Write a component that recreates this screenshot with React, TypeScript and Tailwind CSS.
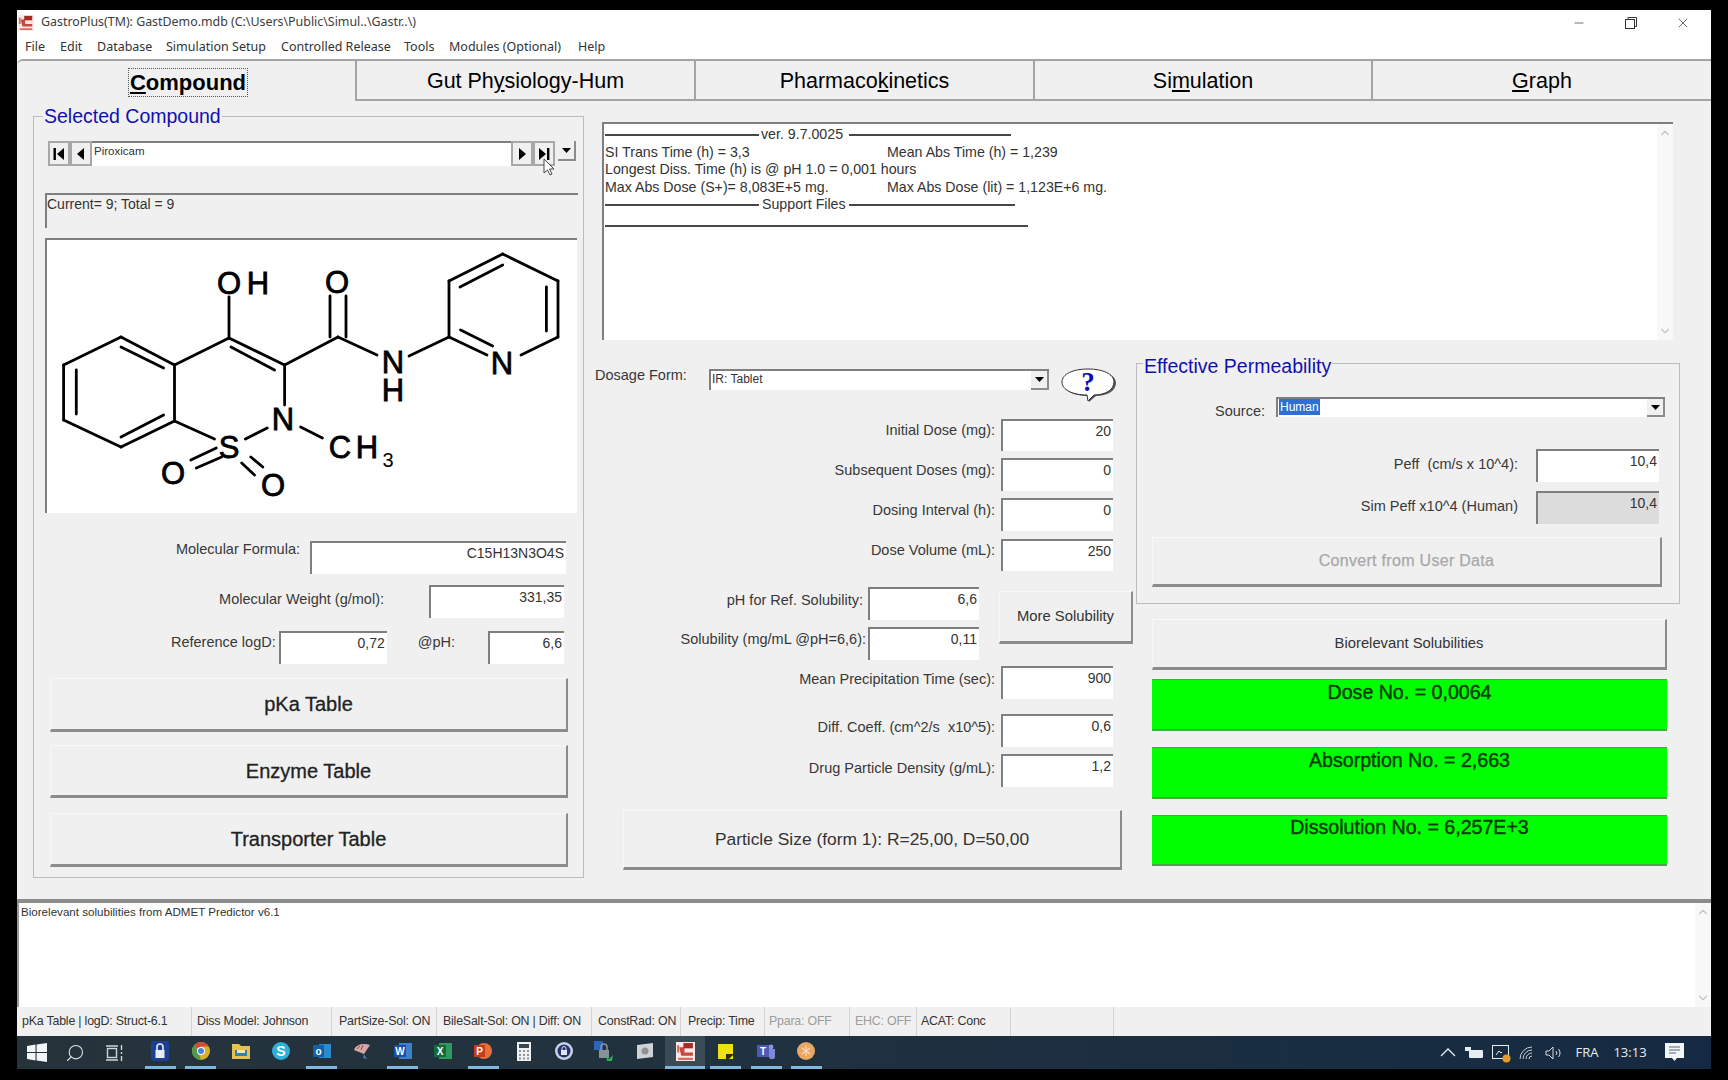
import type { ReactNode } from 'react'
import { ChevronDown, ChevronUp, Minus, Search, X } from 'lucide-react'

const menus = [
  { label: 'File', w: 'w-[35px]' },
  { label: 'Edit', w: 'w-[37px]' },
  { label: 'Database', w: 'w-[69px]' },
  { label: 'Simulation Setup', w: 'w-[115px]' },
  { label: 'Controlled Release', w: 'w-[123px]' },
  { label: 'Tools', w: 'w-[45px]' },
  { label: 'Modules (Optional)', w: 'w-[129px]' },
  { label: 'Help', w: 'w-[40px]' },
]

const statusCells = [
  { label: 'pKa Table | logD: Struct-6.1', w: 'w-[175px]', pad: 'pl-[5px]', off: false },
  { label: 'Diss Model: Johnson', w: 'w-[140px]', pad: 'pl-[5px]', off: false },
  { label: 'PartSize-Sol: ON', w: 'w-[105px]', pad: 'pl-[7px]', off: false },
  { label: 'BileSalt-Sol: ON | Diff: ON', w: 'w-[155px]', pad: 'pl-[6px]', off: false },
  { label: 'ConstRad: ON', w: 'w-[89px]', pad: 'pl-[6px]', off: false },
  { label: 'Precip: Time', w: 'w-[84px]', pad: 'pl-[7px]', off: false },
  { label: 'Ppara: OFF', w: 'w-[85px]', pad: 'pl-[4px]', off: true },
  { label: 'EHC: OFF', w: 'w-[67px]', pad: 'pl-[5px]', off: true },
  { label: 'ACAT: Conc', w: 'w-[94px]', pad: 'pl-[4px]', off: false },
  { label: '', w: 'w-[103px]', pad: 'pl-[4px]', off: false },
]

// bonds of the piroxicam drawing, x1 y1 x2 y2
const bonds = [
  [101, 107, 154.5, 135], [154.5, 135, 154.5, 191], [154.5, 191, 101, 217], [101, 217, 43.6, 190], [43.6, 190, 43.6, 135], [43.6, 135, 101, 107],
  [101, 117, 143.6, 138], [56.3, 140, 56.3, 184], [101, 207, 143.6, 185],
  [154.5, 135, 209, 108], [209, 108, 209, 67], [209, 108, 264.6, 135], [211, 117, 254.5, 140],
  [264.6, 135, 264.6, 175], [154.5, 191, 194.5, 209], [225.4, 209, 247.2, 198], [280.6, 197, 302.4, 208],
  [170.8, 230, 196.3, 218], [176.3, 238, 201.7, 227], [221.7, 233, 234.5, 245], [230.8, 227, 242.8, 237],
  [264.6, 135, 318, 107], [310, 66, 310, 107], [326, 66, 326, 107], [318, 107, 357, 125], [389, 126, 429, 107],
  [429, 107, 429, 51], [429, 51, 482.7, 24], [482.7, 24, 538, 51], [538, 51, 538, 107], [538, 107, 501, 125], [429, 107, 467, 125],
  [440, 57, 482.7, 35], [526.4, 57, 526.4, 101], [440.6, 100, 472.6, 116],
]

const atoms: [string, number, number][] = [
  ['O', 209, 53], ['H', 238, 53], ['O', 317, 52], ['N', 373, 132], ['H', 373, 160], ['N', 482, 133],
  ['N', 263, 189], ['S', 209, 217], ['O', 153, 243], ['O', 253, 255], ['C', 320, 217], ['H', 347, 217],
]

function Molecule() {
  return (
    <svg width="530" height="273" viewBox="27 10 530 273">
      {bonds.map((b, i) => (
        <line key={i} x1={b[0]} y1={b[1]} x2={b[2]} y2={b[3]} stroke="#000" strokeWidth="2.8" strokeLinecap="round" />
      ))}
      {atoms.map(([t, x, y], i) => (
        <text key={i} x={x} y={y} textAnchor="middle" dominantBaseline="central" fontFamily="Liberation Sans, sans-serif" fontSize="31" stroke="#000" strokeWidth="0.8" fill="#000">
          {t}
        </text>
      ))}
      <text x="368" y="230" textAnchor="middle" dominantBaseline="central" fontFamily="Liberation Sans, sans-serif" fontSize="20" fill="#000">3</text>
    </svg>
  )
}

function Field({ value, className = '', grey = false }: { value: string; className?: string; grey?: boolean }) {
  return (
    <div className={`shrink-0 border-t-2 border-l-2 border-[#7f7f7f] pt-[1px] pr-[2px] text-right text-[14px] leading-[18px] text-[#333] ${grey ? 'bg-[#dcdcdc]' : 'bg-white'} ${className}`}>
      {value}
    </div>
  )
}

function Label({ children, className = '' }: { children: ReactNode; className?: string }) {
  return <div className={`whitespace-nowrap text-[14.5px] leading-[18px] text-[#383838] ${className}`}>{children}</div>
}

function Btn({ children, className = '' }: { children: ReactNode; className?: string }) {
  return (
    <div className={`flex shrink-0 items-center justify-center border-t border-l border-t-[#f8f8f8] border-l-[#f8f8f8] border-r-2 border-b-[3px] border-r-[#8c8c8c] border-b-[#8c8c8c] bg-[#f0f0f0] ${className}`}>
      {children}
    </div>
  )
}

function DropBtn() {
  return (
    <div className="flex h-full w-[18px] shrink-0 items-center justify-center border-r-2 border-b-2 border-[#8c8c8c] bg-[#f0f0f0]">
      <svg width="9" height="5" viewBox="0 0 9 5"><path d="M0 0h9L4.5 5z" fill="#000" /></svg>
    </div>
  )
}

function NavBtn({ dir, bar }: { dir: 'l' | 'r'; bar?: boolean }) {
  return (
    <div className="flex h-full w-[22px] items-center justify-center border-2 border-[#a8a8a8] bg-[#f0f0f0]">
      <svg width="14" height="14" viewBox="0 0 14 14">
        {dir === 'l' ? <path d={bar ? 'M12 1v12L5 7z' : 'M10 1v12L3 7z'} fill="#000" /> : <path d={bar ? 'M2 1v12l7-6z' : 'M4 1v12l7-6z'} fill="#000" />}
        {bar && <rect x={dir === 'l' ? 1.5 : 10} width="2.4" y="1" height="12" fill="#000" />}
      </svg>
    </div>
  )
}

function Tab({ children, w, active = false }: { children: ReactNode; w: string; active?: boolean }) {
  return (
    <div className={`flex h-[42px] items-center justify-center border-t-2 border-[#a4a4a4] bg-[#f0f0f0] pt-[2px] text-[21.5px] text-black ${w} ${active ? 'rounded-tl-md' : 'border-l-2 border-b-2'}`}>
      {children}
    </div>
  )
}

function ScrollBar() {
  return (
    <div className="flex w-[16px] shrink-0 flex-col items-center justify-between bg-[#f8f8f8] py-[2px] text-[#c4c4c4]">
      <ChevronUp size={14} strokeWidth={2} />
      <ChevronDown size={14} strokeWidth={2} />
    </div>
  )
}

function Rule({ className }: { className: string }) {
  return <span className={`inline-block h-[2px] shrink-0 bg-[#484848] ${className}`} />
}

function GastroIcon({ size = 16 }: { size?: number }) {
  return (
    <svg width={size} height={size} viewBox="0 0 18 18">
      <rect width="18" height="18" fill="#f6e9e6" />
      <path d="M3 5h5v5h8v3H5z" fill="#c8473f" />
      <rect x="7" y="1" width="9" height="5" fill="#a52a22" />
      <path d="M2 15h14v2H2zM1 3h2v7H1z" fill="#dd6b63" />
    </svg>
  )
}

function TaskCell({ children, on = false, active = false }: { children: ReactNode; on?: boolean; active?: boolean }) {
  return (
    <div className={`flex h-full w-[40.4px] shrink-0 flex-col items-center ${active ? 'bg-[#3a4b56]' : ''}`}>
      <div className="flex flex-1 items-center justify-center">{children}</div>
      <div className={`h-[3px] ${active ? 'w-full' : 'w-[31px]'} ${on ? 'bg-[#7db8de]' : ''}`} />
    </div>
  )
}

const letterProps = { textAnchor: 'middle' as const, fontFamily: 'Liberation Sans, sans-serif', fontWeight: 700, fill: '#fff' }

function Taskbar() {
  return (
    <div className="flex h-[33px] items-stretch bg-[linear-gradient(90deg,#25333b_0%,#1f3140_50%,#152a42_100%)]">
      <div className="w-[10px] shrink-0" />
      <div className="flex w-[29px] shrink-0 items-center">
        <svg width="20" height="19" viewBox="0 0 20 19"><path d="M0 3l8.5-1.400V9H0zM9.600 1.400L20 0v9H9.600zM0 10h8.500v7.400L0 16zM9.600 10H20v9L9.600 17.600z" fill="#f2f5f7" /></svg>
      </div>
      <div className="flex w-[38px] shrink-0 items-center justify-center">
        <Search size={20} strokeWidth={1.3} className="-scale-x-100 text-[#dfe5e8]" />
      </div>
      <div className="flex w-[42px] shrink-0 items-center justify-center">
        <svg width="18" height="16" viewBox="0 0 18 16" fill="none" stroke="#cfd6da" strokeWidth="1.4"><rect x="1.500" y="3.500" width="9" height="9" /><path d="M0 1h12M0 15h12M15.500 0v5M15.500 7v2M15.500 11v5" /></svg>
      </div>
      <div className="w-[4px] shrink-0" />
      <TaskCell on>
        <svg width="18" height="20" viewBox="0 0 18 20"><rect width="18" height="20" rx="2" fill="#1d3f94" /><rect x="4.500" y="9" width="9" height="8" fill="#e8ecf5" /><path d="M6 9V6a3 3 0 016 0v3" stroke="#e8ecf5" strokeWidth="1.6" fill="none" /></svg>
      </TaskCell>
      <TaskCell on>
        <svg width="18" height="18" viewBox="0 0 18 18"><circle cx="9" cy="9" r="9" fill="#d8b02b" /><path d="M9 0a9 9 0 017.800 4.500H9L4 7 2.500 3A9 9 0 019 0z" fill="#d24b3a" /><path d="M0 9a9 9 0 012.500-6L6 9l3 9A9 9 0 010 9z" fill="#4f9a4c" /><circle cx="9" cy="9" r="4" fill="#fff" /><circle cx="9" cy="9" r="3" fill="#4a83d4" /></svg>
      </TaskCell>
      <TaskCell>
        <svg width="18" height="16" viewBox="0 0 18 16"><path d="M0 1h7l2 2h9v13H0z" fill="#e5c24f" /><rect x="3" y="7" width="12" height="6" fill="#2d82b5" /><rect x="5" y="7" width="8" height="3" fill="#f2e4a3" /></svg>
      </TaskCell>
      <TaskCell>
        <svg width="18" height="18" viewBox="0 0 18 18"><circle cx="9" cy="9" r="9" fill="#2eb1d6" /><text x="9" y="14" fontSize="14" {...letterProps}>S</text></svg>
      </TaskCell>
      <TaskCell on>
        <svg width="18" height="18" viewBox="0 0 18 18"><rect x="6" y="2" width="12" height="14" fill="#2a8ccf" /><rect y="3" width="11" height="12" fill="#0f62a8" /><text x="5.500" y="13" fontSize="10" {...letterProps}>o</text></svg>
      </TaskCell>
      <TaskCell>
        <svg width="18" height="18" viewBox="0 0 18 18"><path d="M1 8C3 2 11 1 17 3l-6 9z" fill="#d9a5a5" /><path d="M4 7l3-3M8 8l2-5" stroke="#8c4a4a" /><path d="M11 12l3 5-4-1z" fill="#3f7f9c" /></svg>
      </TaskCell>
      <TaskCell on>
        <svg width="18" height="18" viewBox="0 0 18 18"><rect x="5" y="1" width="13" height="16" fill="#3f7fcf" /><rect y="3" width="12" height="12" fill="#1d4fa0" /><text x="6" y="13" fontSize="10" {...letterProps}>W</text></svg>
      </TaskCell>
      <TaskCell>
        <svg width="18" height="18" viewBox="0 0 18 18"><rect x="5" y="1" width="13" height="16" fill="#2f9a5e" /><rect y="3" width="12" height="12" fill="#146b3a" /><text x="6" y="13" fontSize="10" {...letterProps}>X</text></svg>
      </TaskCell>
      <TaskCell on>
        <svg width="18" height="18" viewBox="0 0 18 18"><circle cx="10" cy="9" r="8" fill="#e8703f" /><rect y="3" width="11" height="12" fill="#c43e1c" /><text x="5.500" y="13" fontSize="10" {...letterProps}>P</text></svg>
      </TaskCell>
      <TaskCell>
        <svg width="14" height="19" viewBox="0 0 14 19"><rect width="14" height="19" fill="#eef2f4" /><rect x="2" y="2" width="10" height="4" fill="#39464e" /><path d="M2 8h2v2H2zM6 8h2v2H6zM10 8h2v2h-2zM2 12h2v2H2zM6 12h2v2H6zM10 12h2v2h-2zM2 15.500h2v2H2zM6 15.500h2v2H6zM10 15.500h2v2h-2z" fill="#8c979e" /></svg>
      </TaskCell>
      <TaskCell>
        <svg width="18" height="18" viewBox="0 0 18 18"><circle cx="9" cy="9" r="9" fill="#c8d3e6" /><circle cx="9" cy="9" r="6.500" fill="#27316b" /><rect x="6" y="8" width="6" height="5" fill="#dfe5f3" /><path d="M7 8V6.500a2 2 0 014 0V8" stroke="#dfe5f3" fill="none" /></svg>
      </TaskCell>
      <TaskCell>
        <svg width="20" height="20" viewBox="0 0 20 20"><rect width="9" height="9" fill="#2b66b8" /><rect x="5" y="9" width="10" height="8" fill="#8a9298" /><path d="M7 9V6a3 3 0 016 0v3" stroke="#8a9298" strokeWidth="1.6" fill="none" /><path d="M12 15l3 3 4-4-1 6h-5z" fill="#26b34a" /></svg>
      </TaskCell>
      <TaskCell>
        <svg width="18" height="16" viewBox="0 0 18 16"><path d="M1 2l16-2v14L1 16z" fill="#cfd1d3" /><circle cx="9" cy="8" r="3.500" fill="#8f9396" /></svg>
      </TaskCell>
      <TaskCell on active>
        <GastroIcon size={19} />
      </TaskCell>
      <TaskCell on>
        <svg width="15" height="15" viewBox="0 0 15 15"><rect width="15" height="15" fill="#efdf15" /><path d="M8 15v-5h7v1l-4 4z" fill="#2c2c1c" /></svg>
      </TaskCell>
      <TaskCell on>
        <svg width="18" height="16" viewBox="0 0 18 16"><circle cx="14" cy="4" r="2.400" fill="#8b95e0" /><path d="M10 6h8v6a3 3 0 01-6 2z" fill="#7e89d8" /><rect y="2" width="12" height="12" fill="#4f58b5" /><text x="6" y="12" fontSize="10" {...letterProps}>T</text></svg>
      </TaskCell>
      <TaskCell on>
        <svg width="18" height="18" viewBox="0 0 18 18"><circle cx="9" cy="9" r="9" fill="#e9a763" /><path d="M9 4v10M5 6l8 6M13 6l-8 6" stroke="#f7dcbc" strokeWidth="1.2" /></svg>
      </TaskCell>
      <div className="ml-auto flex items-center text-[#e6edf2]">
        <div className="flex w-[26.5px] justify-center">
          <svg width="16" height="9" viewBox="0 0 16 9" fill="none" stroke="#e6edf2" strokeWidth="1.3"><path d="M1 8l7-7 7 7" /></svg>
        </div>
        <div className="flex w-[26.5px] justify-center">
          <svg width="18" height="12" viewBox="0 0 18 12"><rect x="4" y="3" width="14" height="8" rx="1" fill="#e6edf2" /><rect y="0" width="6" height="4" fill="#e6edf2" /></svg>
        </div>
        <div className="flex w-[26.5px] justify-center">
          <svg width="20" height="20" viewBox="0 0 20 20"><rect x="1.500" y="2.500" width="16" height="13" fill="none" stroke="#e6edf2" /><path d="M5 12l3-4 2 2 1-1" stroke="#e6edf2" fill="none" /><circle cx="15.500" cy="15.500" r="4" fill="#e79a2e" /></svg>
        </div>
        <div className="flex w-[26.5px] justify-center">
          <svg width="16" height="14" viewBox="0 0 16 14" fill="none" stroke="#c8d0d6"><path d="M1 13A12 12 0 0113 1M4 13a9 9 0 019-9M7 13a6 6 0 016-6M10 13a3 3 0 013-3" /></svg>
        </div>
        <div className="flex w-[26.5px] justify-center">
          <svg width="18" height="14" viewBox="0 0 18 14" fill="none" stroke="#d5dce1"><path d="M1 5h3l4-4v12l-4-4H1zM11 5a3 3 0 010 4M13.500 3a6 6 0 010 8" /></svg>
        </div>
        <div className="w-[40px] text-center font-['Open_Sans',sans-serif] text-[13px]">FRA</div>
        <div className="w-[46px] text-center font-['Open_Sans',sans-serif] text-[13px]">13:13</div>
        <div className="flex w-[42px] justify-center">
          <svg width="19" height="19" viewBox="0 0 19 19"><path d="M0 0h19v15h-7l-2.500 3L7 15H0z" fill="#f2f5f7" /><path d="M4 4h11M4 7h11M4 10h7" stroke="#566673" /></svg>
        </div>
        <div className="w-[16px]" />
      </div>
    </div>
  )
}

export default function App() {
  return (
    <div className="h-[1080px] w-[1728px] overflow-hidden bg-black pt-[10px] pl-[17px] font-['Liberation_Sans',Arial,sans-serif]">
      <div className="flex h-[1059px] w-[1694px] flex-col bg-[#f0f0f0]">
        {/* title bar */}
        <div className="flex h-[25px] items-center bg-white pl-[1px] font-['Noto_Sans',sans-serif] text-[12.4px] text-[#3c3c3c]">
          <GastroIcon />
          <span className="ml-[7px]">GastroPlus(TM): GastDemo.mdb (C:\Users\Public\Simul..\Gastr..\)</span>
          <div className="ml-auto flex items-center text-[#333]">
            <div className="flex w-[52px] justify-center"><Minus size={14} strokeWidth={1.2} /></div>
            <div className="flex w-[52px] justify-center">
              <svg width="12" height="12" viewBox="0 0 12 12" fill="none" stroke="#333"><rect x="0.500" y="2.500" width="9" height="9" /><path d="M3 2.500V.5h8.500v9h-2" /></svg>
            </div>
            <div className="flex w-[52px] justify-center"><X size={16} strokeWidth={1.1} /></div>
            <div className="w-[2px]" />
          </div>
        </div>
        {/* menu */}
        <div className="flex h-[24px] items-center bg-white pl-[8px] font-['Noto_Sans',sans-serif] text-[12.5px] text-[#333]">
          {menus.map((m) => (
            <span key={m.label} className={m.w}>{m.label}</span>
          ))}
        </div>
        {/* tabs */}
        <div className="flex h-[42px] bg-white">
          <Tab w="w-[338px]" active>
            <span className="ml-[4px] border border-dotted border-[#555] px-[1px] text-[22px] leading-[27px] font-bold"><u>C</u>ompound</span>
          </Tab>
          <Tab w="w-[339px]"><span>Gut Ph<u>y</u>siology-Hum</span></Tab>
          <Tab w="w-[339px]"><span>Pharmaco<u>k</u>inetics</span></Tab>
          <Tab w="w-[338px]"><span>Si<u>m</u>ulation</span></Tab>
          <Tab w="w-[340px]"><span><u>G</u>raph</span></Tab>
        </div>

        {/* main area */}
        <div className="flex h-[798px]">
          {/* selected compound */}
          <div className="mt-[15px] ml-[16px] h-[762px] w-[551px] shrink-0 border border-[#bcbcbc]">
            <div className="-mt-[13px] ml-[9px] h-[24px] w-fit bg-[#f0f0f0] px-[1px] text-[19.5px] leading-[24px] text-[#1010b0]">Selected Compound</div>
            <div className="relative mt-[13px] ml-[14px] flex h-[25px]">
              <NavBtn dir="l" bar />
              <NavBtn dir="l" />
              <div className="w-[419px] border-t-2 border-[#7f7f7f] bg-white pt-[1px] pl-[2px] text-[11.5px] leading-[14px] text-[#333]">Piroxicam</div>
              <NavBtn dir="r" />
              <NavBtn dir="r" bar />
              <div className="ml-[3px] h-[20px]"><DropBtn /></div>
              <svg className="absolute top-[17px] left-[495px]" width="12" height="18" viewBox="0 0 12 18">
                <path d="M1 1v14l3.500-3 2.500 5 2-1-2.500-5H11z" fill="#fff" stroke="#333" strokeWidth="0.9" />
              </svg>
            </div>
            <div className="mt-[27px] ml-[11px] h-[35px] w-[533px] border-t-2 border-l-2 border-[#7f7f7f] pt-[1px] text-[14px] leading-[16px] text-[#333]">Current= 9; Total = 9</div>
            <div className="mt-[10px] ml-[11px] h-[275px] w-[532px] border-t-2 border-l-2 border-[#7f7f7f] bg-white">
              <Molecule />
            </div>
            <div className="mt-[28px] flex h-[33px] justify-end gap-[10px] pr-[17px]">
              <Label className="-mt-[1px]">Molecular Formula:</Label>
              <Field value="C15H13N3O4S" className="h-[33px] w-[256px]" />
            </div>
            <div className="mt-[11px] flex h-[33px] justify-end gap-[45px] pr-[19px]">
              <Label className="mt-[5px]">Molecular Weight (g/mol):</Label>
              <Field value="331,35" className="h-[33px] w-[135px]" />
            </div>
            <div className="mt-[13px] flex h-[33px] justify-end pr-[19px]">
              <Label className="mt-[2px] mr-[3px]">Reference logD:</Label>
              <Field value="0,72" className="h-[33px] w-[108px]" />
              <Label className="mt-[2px] mr-[33px] ml-[31px]">@pH:</Label>
              <Field value="6,6" className="h-[33px] w-[76px]" />
            </div>
            <Btn className="mt-[14px] ml-[16px] h-[54px] w-[518px] text-[20px] text-[#222] [-webkit-text-stroke:0.3px_#222]">pKa Table</Btn>
            <Btn className="mt-[13px] ml-[16px] h-[53px] w-[518px] text-[20px] text-[#222] [-webkit-text-stroke:0.3px_#222]">Enzyme Table</Btn>
            <Btn className="mt-[15px] ml-[16px] h-[54px] w-[518px] text-[20px] text-[#222] [-webkit-text-stroke:0.3px_#222]">Transporter Table</Btn>
          </div>

          <div className="flex min-w-0 flex-1 flex-col">
            {/* info box */}
            <div className="mt-[21px] ml-[18px] flex h-[218px] w-[1071px] border-t-2 border-l-2 border-[#7f7f7f] bg-white">
              <div className="flex-1 pt-[2px] pl-[1px] text-[14.2px] leading-[17.6px] text-[#333]">
                <div className="flex items-center gap-[2px]"><Rule className="w-[154px]" /><span className="w-[86px] shrink-0 whitespace-nowrap">ver. 9.7.0025</span><Rule className="w-[162px]" /></div>
                <div className="flex"><span className="w-[282px]">SI Trans Time (h) = 3,3</span><span>Mean Abs Time (h) = 1,239</span></div>
                <div>Longest Diss. Time (h) is @ pH 1.0 = 0,001 hours</div>
                <div className="flex"><span className="w-[282px]">Max Abs Dose (S+)= 8,083E+5 mg.</span><span>Max Abs Dose (lit) = 1,123E+6 mg.</span></div>
                <div className="flex items-center gap-[3px]"><Rule className="w-[154px]" /><span className="w-[84px] shrink-0 whitespace-nowrap">Support Files</span><Rule className="w-[166px]" /></div>
                <Rule className="mt-[5px] block w-[423px]" />
              </div>
              <ScrollBar />
            </div>

            <div className="flex">
              {/* dosage column */}
              <div className="ml-[6px] w-[546px] shrink-0">
                <div className="mt-[28px] flex h-[35px]">
                  <Label className="-mt-[2px] ml-[5px] w-[114px]">Dosage Form:</Label>
                  <div className="mt-[1px] flex h-[21px] w-[340px] border-t-2 border-l-2 border-[#7f7f7f] bg-white pl-[1px] text-[12px] leading-[17px] text-[#333]">
                    <span className="flex-1">IR: Tablet</span>
                    <DropBtn />
                  </div>
                  <svg className="ml-[12px]" width="55" height="35" viewBox="0 0 55 35">
                    <path d="M27 33l-1-6C12 27 1 22 1 14S12 1 27 1s27 5 27 13-9 13-20 13z" fill="#55585c" transform="translate(1 1)" />
                    <path d="M27 33l-1-6C12 27 1 22 1 14S12 1 27 1s26 5 26 13-9 13-20 13z" fill="#fff" stroke="#333" strokeWidth="1" />
                    <text x="27" y="23" textAnchor="middle" fontFamily="Liberation Serif, serif" fontWeight="700" fontSize="27" fill="#0c0cb8">?</text>
                  </svg>
                </div>

                <div className="mt-[16px] flex h-[32px] w-[523px] justify-end gap-[6px]">
                  <Label className="mt-[2px]">Initial Dose (mg):</Label>
                  <Field value="20" className="h-[32px] w-[112px]" />
                </div>
                <div className="mt-[7px] flex h-[33px] w-[523px] justify-end gap-[6px]">
                  <Label className="mt-[3px]">Subsequent Doses (mg):</Label>
                  <Field value="0" className="h-[33px] w-[112px]" />
                </div>
                <div className="mt-[7px] flex h-[33px] w-[523px] justify-end gap-[6px]">
                  <Label className="mt-[3px]">Dosing Interval (h):</Label>
                  <Field value="0" className="h-[33px] w-[112px]" />
                </div>
                <div className="mt-[8px] flex h-[32px] w-[523px] justify-end gap-[6px]">
                  <Label className="mt-[2px]">Dose Volume (mL):</Label>
                  <Field value="250" className="h-[32px] w-[112px]" />
                </div>

                <div className="mt-[16px] flex">
                  <div className="w-[389px] shrink-0">
                    <div className="flex h-[33px] justify-end gap-[5px]">
                      <Label className="mt-[4px]">pH for Ref. Solubility:</Label>
                      <Field value="6,6" className="h-[33px] w-[111px]" />
                    </div>
                    <div className="mt-[7px] flex h-[33px] justify-end gap-[2px]">
                      <Label className="mt-[3px]">Solubility (mg/mL @pH=6,6):</Label>
                      <Field value="0,11" className="h-[33px] w-[111px]" />
                    </div>
                  </div>
                  <Btn className="mt-[4px] ml-[20px] h-[53px] w-[134px] text-[14.8px] text-[#333]">More Solubility</Btn>
                </div>

                <div className="mt-[6px] flex h-[33px] w-[523px] justify-end gap-[6px]">
                  <Label className="mt-[4px]">Mean Precipitation Time (sec):</Label>
                  <Field value="900" className="h-[33px] w-[112px]" />
                </div>
                <div className="mt-[15px] flex h-[33px] w-[523px] justify-end gap-[6px]">
                  <Label className="mt-[4px]">Diff. Coeff. (cm^2/s &nbsp;x10^5):</Label>
                  <Field value="0,6" className="h-[33px] w-[112px]" />
                </div>
                <div className="mt-[7px] flex h-[33px] w-[523px] justify-end gap-[6px]">
                  <Label className="mt-[5px]">Drug Particle Density (g/mL):</Label>
                  <Field value="1,2" className="h-[33px] w-[112px]" />
                </div>
                <Btn className="mt-[23px] ml-[33px] h-[60px] w-[499px] text-[17.4px] text-[#333]">Particle Size (form 1): R=25,00, D=50,00</Btn>
              </div>

              {/* permeability column */}
              <div className="w-[544px] shrink-0">
                <div className="mt-[23px] h-[241px] w-[544px] border border-[#bcbcbc]">
                  <div className="-mt-[10px] ml-[6px] h-[24px] w-fit bg-[#f0f0f0] px-[1px] text-[19.5px] leading-[24px] text-[#1010b0]">Effective Permeability</div>
                  <div className="mt-[19px] flex h-[20px] justify-end gap-[11px] pr-[14px]">
                    <Label className="mt-[5px]">Source:</Label>
                    <div className="flex h-[20px] w-[389px] border-t-2 border-l-2 border-[#7f7f7f] bg-white pl-[1px] text-[12px] leading-[16px]">
                      <div className="flex-1"><span className="inline-block bg-[#2f6fd0] px-[1px] text-white">Human</span></div>
                      <DropBtn />
                    </div>
                  </div>
                  <div className="mt-[32px] flex h-[33px] justify-end gap-[18px] pr-[20px]">
                    <Label className="mt-[6px]">Peff &nbsp;(cm/s x 10^4):</Label>
                    <Field value="10,4" className="h-[33px] w-[123px]" />
                  </div>
                  <div className="mt-[9px] flex h-[33px] justify-end gap-[18px] pr-[20px]">
                    <Label className="mt-[6px]">Sim Peff x10^4 (Human)</Label>
                    <Field value="10,4" grey className="h-[33px] w-[123px]" />
                  </div>
                  <Btn className="mt-[13px] ml-[15px] h-[50px] w-[510px] text-[16px] tracking-[0.3px] text-[#a8a8a8] [-webkit-text-stroke:0.25px_#a8a8a8]">Convert from User Data</Btn>
                </div>
                <Btn className="mt-[15px] ml-[16px] h-[51px] w-[515px] text-[14.8px] text-[#333]">Biorelevant Solubilities</Btn>
                <div className="mt-[9px] ml-[16px] h-[52px] w-[515px] border-t border-b-2 border-[#55a055] bg-[#00ff00] pt-[1px] text-center text-[19.6px] leading-[22px] text-[#063806] [-webkit-text-stroke:0.4px_#063806]">Dose No. = 0,0064</div>
                <div className="mt-[16px] ml-[16px] h-[52px] w-[515px] border-t border-b-2 border-[#55a055] bg-[#00ff00] pt-[1px] text-center text-[19.6px] leading-[22px] text-[#063806] [-webkit-text-stroke:0.4px_#063806]">Absorption No. = 2,663</div>
                <div className="mt-[16px] ml-[16px] h-[51px] w-[515px] border-t border-b-2 border-[#55a055] bg-[#00ff00] text-center text-[19.6px] leading-[22px] text-[#063806] [-webkit-text-stroke:0.4px_#063806]">Dissolution No. = 6,257E+3</div>
              </div>
            </div>
          </div>
        </div>

        {/* log */}
        <div className="flex h-[108px] border-t-[4px] border-[#8c8c8c] bg-white">
          <div className="flex-1 border-l-2 border-[#9a9a9a] pl-[2px] text-[11.6px] leading-[18px] text-[#333]">Biorelevant solubilities from ADMET Predictor v6.1</div>
          <ScrollBar />
        </div>

        {/* status bar */}
        <div className="flex h-[29px] items-stretch bg-[#f0f0f0] text-[12.4px] leading-[29px] tracking-[-0.2px]">
          {statusCells.map((c, i) => (
            <div key={i} className={`${c.w} ${c.pad} shrink-0 whitespace-nowrap border-r border-[#d4d4d4] ${c.off ? 'text-[#9c9c9c]' : 'text-[#333]'}`}>{c.label}</div>
          ))}
        </div>

        <Taskbar />
      </div>
    </div>
  )
}
